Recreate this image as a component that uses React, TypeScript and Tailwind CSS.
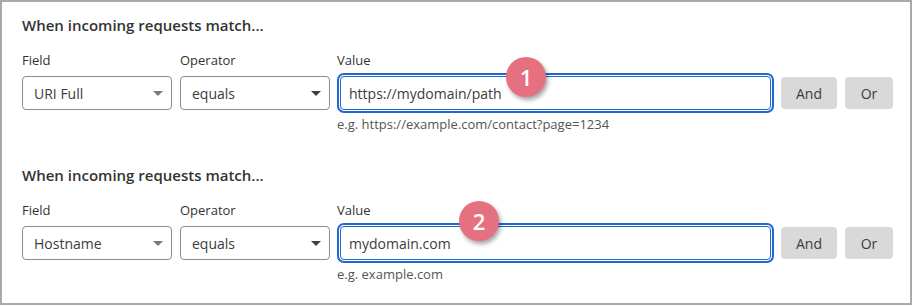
const rules = [
  {
    field: 'URI Full',
    value: 'https://mydomain/path',
    hint: 'e.g. https://example.com/contact?page=1234',
    badge: '1',
    badgePos: 'left-[166px] top-[-19px]',
    fieldArrow: 'border-t-[#7a7a7a]',
  },
  {
    field: 'Hostname',
    value: 'mydomain.com',
    hint: 'e.g. example.com',
    badge: '2',
    badgePos: 'left-[119px] top-[-25px]',
    fieldArrow: 'border-t-[#7a7a7a]',
  },
];

function Select({ label, arrow }: { label: string; arrow: string }) {
  return (
    <div className="w-[150px] h-[34px] flex items-center justify-between pl-[11px] pr-[8px] rounded-[4px] border border-[#8c8c8c] bg-white text-[14px] text-[#3c3c3c]">
      <span>{label}</span>
      <span className={`w-0 h-0 border-l-[5px] border-r-[5px] border-t-[5px] border-l-transparent border-r-transparent ${arrow}`} />
    </div>
  );
}

export default function App() {
  return (
    <div
      className="w-[912px] h-[306px] bg-white"
      style={{ fontFamily: '"Open Sans", "Liberation Sans", sans-serif' }}
    >
      <div className="w-[912px] h-[305px] border-2 border-[#a9a9a9] pl-[20px] pt-[12px]">
        {rules.map((r, i) => (
          <div key={i} className={i === 0 ? '' : 'mt-[32px]'}>
            <h2 className="text-[15px] font-semibold text-[#333333] leading-[22px]">
              When incoming requests match...
            </h2>

            <div className="flex mt-[15px] text-[13px] text-[#333333] leading-[18px]">
              <div className="w-[158px]">Field</div>
              <div className="w-[157px]">Operator</div>
              <div>Value</div>
            </div>

            <div className="flex items-center mt-[7px]">
              <Select label={r.field} arrow={r.fieldArrow} />
              <div className="ml-[8px]">
                <Select label="equals" arrow="border-t-[#404040]" />
              </div>

              <div className="ml-[10px] relative">
                <div className="w-[431px] h-[34px] flex items-center pl-[8px] rounded-[4px] border border-[#1f68cf] outline-2 outline-[#1f68cf] outline-offset-1 text-[14px] text-[#3c3c3c]">
                  {r.value}
                </div>
                <div
                  className={`absolute ${r.badgePos} w-[40px] h-[40px] rounded-full bg-[#e5707f] flex items-center justify-center text-white text-[22px] font-semibold shadow-[2px_3px_4px_rgba(0,0,0,0.35)]`}
                >
                  {r.badge}
                </div>
              </div>

              <button className="ml-[10px] w-[56px] h-[32px] rounded-[4px] bg-[#d9d9d9] text-[14px] text-[#3c3c3c]">
                And
              </button>
              <button className="ml-[8px] w-[48px] h-[32px] rounded-[4px] bg-[#d9d9d9] text-[14px] text-[#3c3c3c]">
                Or
              </button>
            </div>

            <div className="ml-[315px] mt-[6px] text-[13px] text-[#555555] leading-[16px]">
              {r.hint}
            </div>
          </div>
        ))}
      </div>
    </div>
  );
}
